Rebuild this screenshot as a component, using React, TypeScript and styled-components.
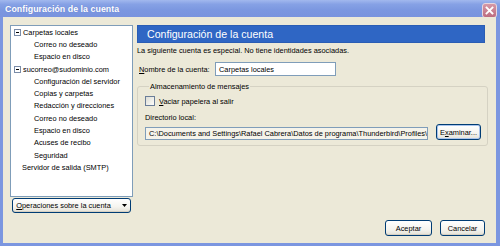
import React from "react";
import styled, { createGlobalStyle } from "styled-components";

const Global = createGlobalStyle`
  html, body { margin: 0; padding: 0; background: #ece9d8; }
  body { font-family: "Liberation Sans", Arial, sans-serif; }
  * { box-sizing: border-box; }
`;

const Window = styled.div`
  width: 500px;
  height: 246px;
  display: flex;
  flex-direction: column;
  background: #7b96e0;
  overflow: hidden;
`;

const TitleBar = styled.div`
  height: 17px;
  flex: none;
  display: flex;
  align-items: center;
  justify-content: space-between;
  padding: 0 3px 0 5px;
  background: linear-gradient(#a2b8ee 0%, #86a1e5 25%, #7b97e0 60%, #7993de 100%);
`;

const Title = styled.span`
  color: #fff;
  font-weight: bold;
  font-size: 8.8px;
  letter-spacing: 0.05px;
  text-shadow: 0 0 1px rgba(60, 80, 160, 0.4);
`;

const CloseBtn = styled.div`
  width: 15px;
  height: 15px;
  margin-top: 4px;
  border: 1px solid #e8d6de;
  border-radius: 3px;
  background: linear-gradient(#d598a6, #bd6c80);
  display: flex;
  align-items: center;
  justify-content: center;
`;

const Body = styled.div`
  flex: 1;
  margin: 0 4px 3px 3px;
  background: #ece9d8;
  display: flex;
  flex-direction: column;
  padding: 8px 8px 0 7px;
`;

const Main = styled.div`
  display: flex;
  gap: 4px;
`;

const LeftCol = styled.div`
  width: 123px;
  display: flex;
  flex-direction: column;
  gap: 1px;
`;

const Tree = styled.div`
  height: 172px;
  background: #fff;
  border: 1px solid #7f9db9;
  font-size: 7.4px;
  color: #000;
`;

const TreeRow = styled.div<{ $indent: number }>`
  height: 12.3px;
  display: flex;
  align-items: center;
  padding-left: ${(p) => p.$indent}px;
  white-space: nowrap;
`;

const Toggle = styled.span`
  width: 7px;
  height: 7px;
  border: 1px solid #7a8ca8;
  background: #fff;
  margin-right: 2px;
  margin-left: 1px;
  position: relative;
  display: inline-block;
  flex: none;
  &::after {
    content: "";
    position: absolute;
    left: 1px;
    right: 1px;
    top: 2px;
    height: 1px;
    background: #000;
  }
`;

const XPButton = styled.button<{ $w: number; $h: number; $focus?: boolean }>`
  width: ${(p) => p.$w}px;
  height: ${(p) => p.$h}px;
  padding: 0;
  font-family: "Liberation Sans", Arial, sans-serif;
  font-size: 7.4px;
  color: #000;
  border: 1px solid #003c74;
  border-radius: 3px;
  background: linear-gradient(#ffffff 0%, #f5f4ef 60%, #e3e1d6 100%);
  box-shadow: ${(p) =>
    p.$focus ? "inset 0 0 0 1px #a8c3ec" : "inset 0 -1px 0 #d6d0c2"};
  display: flex;
  align-items: center;
  justify-content: center;
  gap: 11px;
`;

const OpsButton = styled(XPButton)`
  margin-left: 2px;
`;

const U = styled.span`
  text-decoration: underline;
  text-underline-offset: 1px;
`;

const RightCol = styled.div`
  flex: 1;
  display: flex;
  flex-direction: column;
  font-size: 7.4px;
  color: #000;
`;

const Header = styled.div`
  height: 18px;
  margin-right: 3px;
  background: #2f66c4;
  border: 1px solid #2a5db4;
  color: #fff;
  font-size: 10.6px;
  display: flex;
  align-items: center;
  padding-left: 9px;
`;

const Desc = styled.div`
  margin-top: 3px;
  height: 10px;
  line-height: 10px;
`;

const NameRow = styled.div`
  margin-top: 6px;
  display: flex;
  align-items: center;
  padding-left: 2px;
`;

const Label = styled.span`
  width: 76px;
`;

const TextInput = styled.div<{ $w: number; $h: number; $bg: string }>`
  width: ${(p) => p.$w}px;
  height: ${(p) => p.$h}px;
  border: 1px solid #7f9db9;
  background: ${(p) => p.$bg};
  display: flex;
  align-items: center;
  padding-left: 3px;
  overflow: hidden;
  white-space: nowrap;
`;

const Group = styled.fieldset`
  margin: 6px 0 0 0;
  padding: 4px 6px 5px 7px;
  border: 1px solid #d5d2c3;
  border-radius: 3px;
`;

const Legend = styled.legend`
  padding: 0 1px;
  margin-left: 4px;
  font-size: 7.4px;
  color: #000;
`;

const CheckRow = styled.div`
  display: flex;
  align-items: center;
  gap: 4px;
  height: 12px;
`;

const Check = styled.span`
  width: 10px;
  height: 10px;
  border: 1px solid #6a7d98;
  background: linear-gradient(135deg, #dcdcd4, #fdfdfb);
  display: inline-block;
`;

const DirLabel = styled.div`
  margin-top: 5px;
  height: 11px;
  line-height: 11px;
`;

const DirRow = styled.div`
  margin-top: 1px;
  display: flex;
  align-items: flex-end;
  gap: 8px;
`;

const Footer = styled.div`
  display: flex;
  justify-content: flex-end;
  gap: 8px;
  margin-top: 7px;
  padding-right: 3px;
`;

const treeItems: { label: string; indent: number; toggle?: boolean }[] = [
  { label: "Carpetas locales", indent: 2, toggle: true },
  { label: "Correo no deseado", indent: 23 },
  { label: "Espacio en disco", indent: 23 },
  { label: "sucorreo@sudominio.com", indent: 2, toggle: true },
  { label: "Configuración del servidor", indent: 23 },
  { label: "Copias y carpetas", indent: 23 },
  { label: "Redacción y direcciones", indent: 23 },
  { label: "Correo no deseado", indent: 23 },
  { label: "Espacio en disco", indent: 23 },
  { label: "Acuses de recibo", indent: 23 },
  { label: "Seguridad", indent: 23 },
  { label: "Servidor de salida (SMTP)", indent: 11 },
];

export default function App() {
  return (
    <>
      <Global />
      <Window>
        <TitleBar>
          <Title>Configuración de la cuenta</Title>
          <CloseBtn>
            <svg width="9" height="9" viewBox="0 0 9 9">
              <path d="M1.5 1.5 L7.5 7.5 M7.5 1.5 L1.5 7.5" stroke="#fff" strokeWidth="1.8" strokeLinecap="square" />
            </svg>
          </CloseBtn>
        </TitleBar>
        <Body>
          <Main>
            <LeftCol>
              <Tree>
                {treeItems.map((it, i) => (
                  <TreeRow key={i} $indent={it.indent}>
                    {it.toggle && <Toggle />}
                    {it.label}
                  </TreeRow>
                ))}
              </Tree>
              <OpsButton $w={119} $h={15}>
                <span>
                  <U>O</U>peraciones sobre la cuenta
                </span>
                <svg width="5" height="3" viewBox="0 0 5 3">
                  <path d="M0 0 H5 L2.5 3 Z" fill="#000" />
                </svg>
              </OpsButton>
            </LeftCol>
            <RightCol>
              <Header>Configuración de la cuenta</Header>
              <Desc>La siguiente cuenta es especial. No tiene identidades asociadas.</Desc>
              <NameRow>
                <Label>
                  <U>N</U>ombre de la cuenta:
                </Label>
                <TextInput $w={121} $h={14} $bg="#fff">Carpetas locales</TextInput>
              </NameRow>
              <Group>
                <Legend>Almacenamiento de mensajes</Legend>
                <CheckRow>
                  <Check />
                  <span>
                    <U>V</U>aciar papelera al salir
                  </span>
                </CheckRow>
                <DirLabel>Directorio local:</DirLabel>
                <DirRow>
                  <TextInput $w={283} $h={13} $bg="#f5f3ea">
                    C:\Documents and Settings\Rafael Cabrera\Datos de programa\Thunderbird\Profiles\
                  </TextInput>
                  <XPButton $w={45} $h={16} $focus>
                    <span>
                      E<U>x</U>aminar...
                    </span>
                  </XPButton>
                </DirRow>
              </Group>
            </RightCol>
          </Main>
          <Footer>
            <XPButton $w={47} $h={16}>Aceptar</XPButton>
            <XPButton $w={45} $h={16}>Cancelar</XPButton>
          </Footer>
        </Body>
      </Window>
    </>
  );
}
